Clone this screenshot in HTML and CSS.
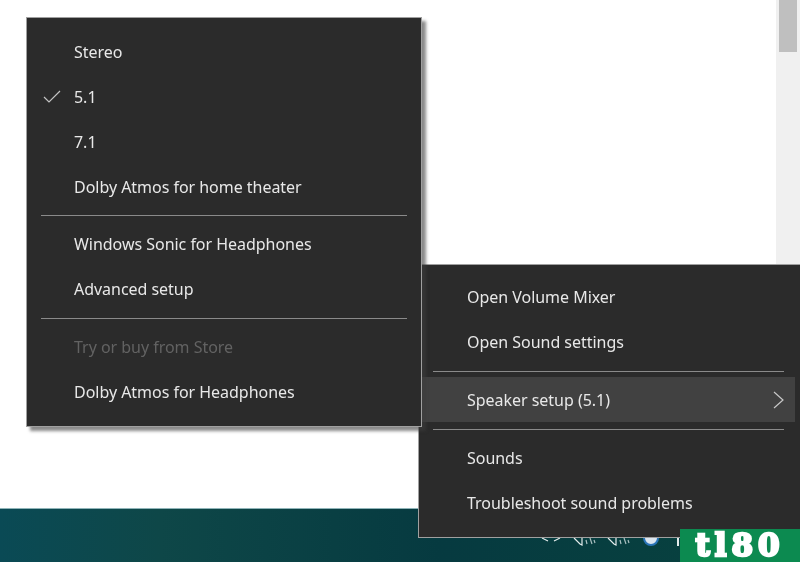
FILE: index.html
```html
<!DOCTYPE html>
<html lang="en">
<head>
<meta charset="utf-8">
<title>Speaker setup</title>
<link rel="stylesheet" href="styles.css">
</head>
<body>
<div class="desktop">
  <main class="window">
    <div class="scrollbar"><div class="thumb"></div></div>
  </main>
  <footer class="taskbar">
    <svg class="tray" width="140" height="10" viewBox="0 0 140 10" fill="none" stroke="#e4ecec" stroke-width="1.2">
      <path d="M1 1l6 3M19 1l-6 3"/>
      <path d="M33 1l6 6 2 1V1"/>
      <path d="M45 3l1 4M49 1l2 6M53 3l1 3" stroke="#a9bfc0"/>
      <path d="M67 1l6 6 2 1V1"/>
      <path d="M79 3l1 4M83 1l2 6M87 3l1 3" stroke="#a9bfc0"/>
      <circle cx="110" cy="1" r="7" fill="#dce6f0" stroke="#2a74b8" stroke-width="2"/>
      <path d="M137 0v9" stroke-width="2"/>
    </svg>
  </footer>

  <div class="menu menu-sound">
    <div class="item">Open Volume Mixer</div>
    <div class="item">Open Sound settings</div>
    <div class="sep sep-wide"></div>
    <div class="item hover">Speaker setup (5.1)
      <svg class="chevron" width="12" height="18" viewBox="0 0 12 18" fill="none" stroke="#c8c8c8" stroke-width="1.2"><path d="M1 1l9 8-9 8"/></svg>
    </div>
    <div class="sep sep-wide"></div>
    <div class="item">Sounds</div>
    <div class="item">Troubleshoot sound problems</div>
  </div>

  <div class="menu menu-format">
    <div class="item">Stereo</div>
    <div class="item">
      <svg class="check" width="18" height="13" viewBox="0 0 18 13" fill="none" stroke="#c4c4c4" stroke-width="1.2"><path d="M1 7l5 5L17 1"/></svg>
      5.1
    </div>
    <div class="item">7.1</div>
    <div class="item">Dolby Atmos for home theater</div>
    <div class="sep sep-tight"></div>
    <div class="item">Windows Sonic for Headphones</div>
    <div class="item">Advanced setup</div>
    <div class="sep sep-wide"></div>
    <div class="item disabled">Try or buy from Store</div>
    <div class="item">Dolby Atmos for Headphones</div>
  </div>

  <div class="logo">tl80</div>
</div>
</body>
</html>
```
FILE: styles.css
```css
* { box-sizing: border-box; }
html, body { margin: 0; height: 100%; }
body {
  overflow: hidden;
  font-family: "Noto Sans", "Open Sans", sans-serif;
  font-size: 16px;
  letter-spacing: -0.03px;
  color: #e8e8e8;
}
.desktop {
  position: relative;
  width: 800px;
  height: 562px;
  display: flex;
  flex-direction: column;
  overflow: hidden;
  background: #fff;
  filter: blur(0.35px);
}
.window {
  position: relative;
  flex: 1;
  background: #fff;
}
.scrollbar {
  position: absolute;
  top: 0;
  right: 0;
  width: 24px;
  height: 264px;
  padding: 0 3px;
  background: #f0f0f0;
}
.thumb {
  height: 52px;
  background: #bfbfbf;
}
.taskbar {
  position: relative;
  height: 54px;
  border-top: 1px solid #8fb4b8;
  background: linear-gradient(90deg, #0a4a55 0%, #0e4748 20%, #063a40 55%, #08433f 100%);
}
.tray {
  position: absolute;
  left: 541px;
  top: 28px;
}
.menu {
  position: absolute;
  background: #2b2b2b;
  border: 1px solid #a0a0a0;
}
.menu-format {
  left: 26px;
  top: 17px;
  width: 396px;
  height: 410px;
  padding: 11px 0;
  box-shadow: 4px 4px 3px rgba(60, 60, 60, .6);
}
.menu-sound {
  left: 418px;
  top: 264px;
  width: 386px;
  height: 274px;
  padding: 9px 8px 10px 3px;
}
.item {
  position: relative;
  height: 45px;
  line-height: 46px;
  white-space: nowrap;
}
.menu-format .item { padding-left: 47px; }
.menu-sound .item { padding-left: 45px; }
.menu-sound .hover { background: #414141; }
.disabled { color: #626262; }
.check {
  position: absolute;
  left: 16px;
  top: 16px;
}
.chevron {
  position: absolute;
  left: 351px;
  top: 14px;
}
.sep::before {
  content: "";
  display: block;
  height: 1px;
  background: #8a8a8a;
}
.sep-tight { height: 12px; padding-top: 6px; }
.sep-wide { height: 13px; padding-top: 7px; }
.menu-format .sep { margin: 0 14px; }
.menu-sound .sep { margin: 0 11px; }
.logo {
  position: absolute;
  right: 0;
  bottom: 0;
  width: 120px;
  height: 33px;
  display: flex;
  align-items: center;
  justify-content: center;
  background: #0c8a50;
  color: #fff;
  font-family: "DejaVu Serif", serif;
  font-weight: 700;
  font-size: 31px;
  line-height: 33px;
  letter-spacing: 5px;
  -webkit-text-stroke: 2.5px #fff;
  white-space: nowrap;
}
```
